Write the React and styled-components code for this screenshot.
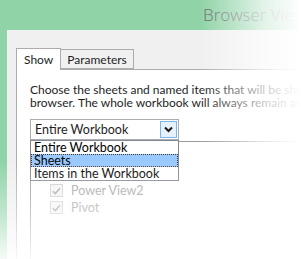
import React from 'react';
import styled, { createGlobalStyle } from 'styled-components';

const Global = createGlobalStyle`
  html, body {
    margin: 0;
    padding: 0;
    background: #ffffff;
  }
  body {
    font-family: Lato, "Noto Sans", sans-serif;
  }
`;

const Frame = styled.div`
  position: relative;
  width: 301px;
  height: 259px;
  overflow: hidden;
  background: #8fd3a6;
  display: flex;
  flex-direction: column;
`;

const TitleBar = styled.div`
  height: 30px;
  box-sizing: border-box;
  padding: 5px 0 0 203px;
  font-family: "Open Sans", sans-serif;
  font-weight: 300;
  font-size: 17px;
  line-height: 20px;
  color: #666666;
  white-space: nowrap;
`;

const Body = styled.div`
  flex: 1;
  margin-left: 7px;
  background: #f0f0f0;
  padding: 18px 0 0 9px;
  display: flex;
  flex-direction: column;
`;

const TabRow = styled.div`
  display: flex;
  align-items: flex-end;
  height: 21px;
`;

const Tab = styled.div`
  box-sizing: border-box;
  height: ${(p) => (p.$active ? '22px' : '20px')};
  padding: 0 ${(p) => (p.$active ? '7px' : '6px')};
  border: 1px solid #acacac;
  border-bottom: ${(p) => (p.$active ? 'none' : '1px solid #acacac')};
  border-left: ${(p) => (p.$first ? '1px solid #acacac' : 'none')};
  background: ${(p) => (p.$active ? '#ffffff' : '#f0f0f0')};
  font-size: 12px;
  line-height: ${(p) => (p.$active ? '21px' : '19px')};
  color: #1e1e1e;
  margin-bottom: ${(p) => (p.$active ? '-1px' : '0')};
  position: relative;
  z-index: ${(p) => (p.$active ? 1 : 0)};
`;

const Panel = styled.div`
  flex: 1;
  background: #ffffff;
  border-top: 1px solid #acacac;
  border-left: 1px solid #acacac;
  padding: 13px 0 0 13px;
  display: flex;
  flex-direction: column;
`;

const Intro = styled.p`
  margin: 0;
  font-size: 12px;
  line-height: 13px;
  color: #1e1e1e;
  white-space: nowrap;
`;

const ComboWrap = styled.div`
  position: relative;
  margin-top: 10px;
  width: 149px;
`;

const Combo = styled.div`
  box-sizing: border-box;
  width: 149px;
  height: 21px;
  border: 1px solid #abadb3;
  background: #ffffff;
  display: flex;
  align-items: center;
  justify-content: space-between;
  padding: 0 1px 0 4px;
  font-size: 12.5px;
  color: #1e1e1e;
`;

const DropButton = styled.div`
  box-sizing: border-box;
  width: 17px;
  height: 17px;
  border: 1px solid #7eb4ea;
  background: #e5f1fb;
  display: flex;
  align-items: center;
  justify-content: center;
`;

const Menu = styled.div`
  position: absolute;
  left: 0;
  top: 21px;
  z-index: 2;
  box-sizing: border-box;
  width: 149px;
  border: 1px solid #828790;
  background: #ffffff;
`;

const MenuItem = styled.div`
  box-sizing: border-box;
  height: 13px;
  padding-left: 3px;
  font-size: 12.5px;
  line-height: 13px;
  color: #000000;
  background: ${(p) => (p.$selected ? '#99c9ff' : 'transparent')};
  outline: ${(p) => (p.$selected ? '1px dotted #4a3b2a' : 'none')};
  outline-offset: -1px;
`;

const ListBox = styled.div`
  flex: 1;
  margin-top: 1px;
  border-top: 1px solid #9a9a9a;
  border-left: 1px solid #9a9a9a;
  padding: 42px 0 0 19px;
  display: flex;
  flex-direction: column;
  gap: 4px;
`;

const CheckRow = styled.div`
  display: flex;
  align-items: center;
  gap: 8px;
  height: 13px;
  font-size: 12.5px;
  color: #a2a2a2;
`;

const CheckBox = styled.span`
  box-sizing: border-box;
  width: 13px;
  height: 13px;
  border: 1px solid #cfcfcf;
  background: #f4f4f4;
  display: flex;
  align-items: center;
  justify-content: center;
`;

const Fade = styled.div`
  position: absolute;
  inset: 0;
  pointer-events: none;
  z-index: 5;
  background:
    linear-gradient(to right, rgba(255,255,255,0) 200px, rgba(255,255,255,0.75) 265px, #ffffff 301px),
    linear-gradient(to bottom, rgba(255,255,255,0) 160px, rgba(255,255,255,0.5) 220px, rgba(255,255,255,0.92) 259px);
`;

const Check = () => (
  <svg width="9" height="8" viewBox="0 0 9 8">
    <path d="M1 4.2 L3.3 6.5 L8 1.2" fill="none" stroke="#a8a8a8" strokeWidth="1.6" />
  </svg>
);

const Chevron = () => (
  <svg width="9" height="7" viewBox="0 0 9 7">
    <path d="M1 1.5 L4.5 5 L8 1.5" fill="none" stroke="#1a1a1a" strokeWidth="2" />
  </svg>
);

const App = () => (
  <>
    <Global />
    <Frame>
      <TitleBar>Browser View Options</TitleBar>
      <Body>
        <TabRow>
          <Tab $active $first>Show</Tab>
          <Tab>Parameters</Tab>
        </TabRow>
        <Panel>
          <Intro>
            Choose the sheets and named items that will be shown in the
            <br />
            browser. The whole workbook will always remain available
          </Intro>
          <ComboWrap>
            <Combo>
              <span>Entire Workbook</span>
              <DropButton>
                <Chevron />
              </DropButton>
            </Combo>
            <Menu>
              <MenuItem>Entire Workbook</MenuItem>
              <MenuItem $selected>Sheets</MenuItem>
              <MenuItem>Items in the Workbook</MenuItem>
            </Menu>
          </ComboWrap>
          <ListBox>
            <CheckRow>
              <CheckBox><Check /></CheckBox>
              Power View2
            </CheckRow>
            <CheckRow>
              <CheckBox><Check /></CheckBox>
              Pivot
            </CheckRow>
          </ListBox>
        </Panel>
      </Body>
      <Fade />
    </Frame>
  </>
);

export default App;
